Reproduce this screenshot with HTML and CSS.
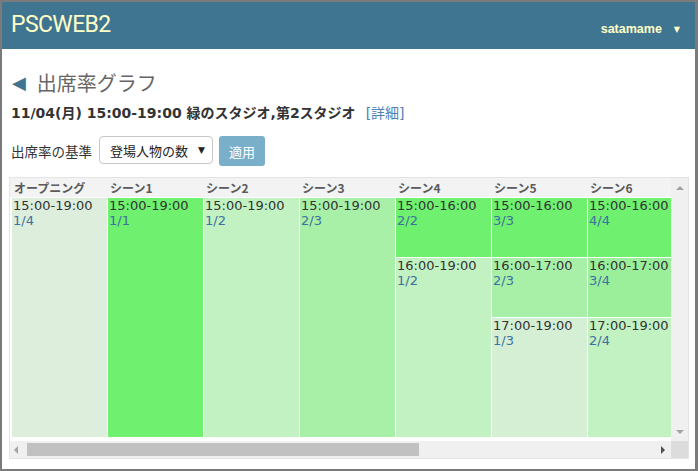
FILE: index.html
```html
<!DOCTYPE html>
<html lang="ja">
<head>
<meta charset="utf-8">
<title>PSCWEB2</title>
<link rel="stylesheet" href="styles.css">
</head>
<body>
<div class="frame">
  <header class="navbar">
    <div class="brand">PSCWEB2</div>
    <div class="user"><span class="user-name">satamame</span><span class="caret">▼</span></div>
  </header>
  <main class="content">
    <h1 class="page-title"><span class="back">◀</span><span>出席率グラフ</span></h1>
    <p class="subtitle"><b>11/04(月) 15:00-19:00 緑のスタジオ,第2スタジオ</b><a class="detail">[詳細]</a></p>
    <div class="form-row">
      <span class="label">出席率の基準</span>
      <div class="select"><span>登場人物の数</span><span class="sel-caret">▼</span></div>
      <button class="btn">適用</button>
    </div>
    <div class="scrollbox">
      <div class="viewport">
        <div class="col">
          <div class="head">オープニング</div>
          <div class="cell h4 r25"><div class="time">15:00-19:00</div><div class="ratio">1/4</div></div>
        </div>
        <div class="col">
          <div class="head">シーン1</div>
          <div class="cell h4 r100"><div class="time">15:00-19:00</div><div class="ratio">1/1</div></div>
        </div>
        <div class="col">
          <div class="head">シーン2</div>
          <div class="cell h4 r50"><div class="time">15:00-19:00</div><div class="ratio">1/2</div></div>
        </div>
        <div class="col">
          <div class="head">シーン3</div>
          <div class="cell h4 r67"><div class="time">15:00-19:00</div><div class="ratio">2/3</div></div>
        </div>
        <div class="col">
          <div class="head">シーン4</div>
          <div class="cell h1 r100"><div class="time">15:00-16:00</div><div class="ratio">2/2</div></div>
          <div class="cell h3 r50"><div class="time">16:00-19:00</div><div class="ratio">1/2</div></div>
        </div>
        <div class="col">
          <div class="head">シーン5</div>
          <div class="cell h1 r100"><div class="time">15:00-16:00</div><div class="ratio">3/3</div></div>
          <div class="cell h1 r67"><div class="time">16:00-17:00</div><div class="ratio">2/3</div></div>
          <div class="cell h2 r33"><div class="time">17:00-19:00</div><div class="ratio">1/3</div></div>
        </div>
        <div class="col">
          <div class="head">シーン6</div>
          <div class="cell h1 r100"><div class="time">15:00-16:00</div><div class="ratio">4/4</div></div>
          <div class="cell h1 r75"><div class="time">16:00-17:00</div><div class="ratio">3/4</div></div>
          <div class="cell h2 r50"><div class="time">17:00-19:00</div><div class="ratio">2/4</div></div>
        </div>
      </div>
      <div class="vbar">
        <span class="arr-up"></span>
        <span class="arr-down"></span>
      </div>
      <div class="hbar">
        <span class="arr-left"></span>
        <span class="thumb"></span>
        <span class="arr-right"></span>
      </div>
      <div class="corner"></div>
    </div>
  </main>
</div>
</body>
</html>
```

FILE: styles.css
```css
* { box-sizing: border-box; }
html, body { margin: 0; padding: 0; }
body {
  font-family: "DejaVu Sans", "Noto Sans CJK JP", sans-serif;
  color: #333;
  background: #fff;
}
.frame {
  width: 698px;
  height: 471px;
  border: 2px solid #7b7b7b;
  border-right-width: 3px;
  overflow: hidden;
}
.navbar {
  height: 47px;
  background: #3f7590;
  display: flex;
  align-items: center;
  justify-content: space-between;
  padding: 0 15px 0 9px;
}
.brand {
  font-family: Roboto, "Liberation Sans", sans-serif;
  font-size: 23px;
  letter-spacing: -0.6px;
  color: #ffffc8;
  line-height: 1;
  margin-top: -2px;
}
.user {
  display: flex;
  align-items: center;
  color: #ffffc8;
  margin-top: 7px;
}
.user-name {
  font-family: "Liberation Sans", Arial, sans-serif;
  font-weight: bold;
  font-size: 12.5px;
}
.caret {
  font-size: 8px;
  margin-left: 12px;
}
.content {
  padding: 0 6px 0 7px;
}
.page-title {
  margin: 20px 0 0 0;
  height: 28px;
  line-height: 28px;
  font-weight: normal;
  font-size: 20px;
  color: #666;
  font-family: "Noto Sans CJK JP", sans-serif;
  display: flex;
  align-items: center;
}
.back {
  color: #3f7590;
  font-family: "DejaVu Sans", sans-serif;
  font-size: 18px;
  margin: 0 11px 0 3px;
}
.subtitle {
  margin: 6px 0 0 2px;
  height: 20px;
  line-height: 20px;
  font-size: 14px;
  color: #333;
}
.subtitle b { font-weight: bold; }
.detail {
  color: #4a82b4;
  margin-left: 10px;
  font-family: "DejaVu Sans", "Noto Sans CJK JP", sans-serif;
}
.form-row {
  margin: 13px 0 0 2px;
  display: flex;
  align-items: center;
  height: 30px;
}
.label {
  font-size: 13.5px;
  font-family: "Noto Sans CJK JP", sans-serif;
  color: #333;
}
.select {
  margin-left: 7px;
  width: 114px;
  height: 28px;
  border: 1px solid #c8c8c8;
  border-radius: 4px;
  display: flex;
  align-items: center;
  justify-content: space-between;
  padding: 0 7px 0 10px;
  font-family: "Noto Sans CJK JP", sans-serif;
  font-size: 13px;
  color: #222;
  margin-top: -2px;
}
.sel-caret {
  font-family: "DejaVu Sans", sans-serif;
  font-size: 9px;
}
.btn {
  margin-left: 6px;
  width: 46px;
  height: 30px;
  border: none;
  border-radius: 3px;
  background: #7aafca;
  color: #fff;
  font-family: "Noto Sans CJK JP", sans-serif;
  font-size: 13px;
  padding: 0;
}
.scrollbox {
  margin-top: 11px;
  width: 680px;
  height: 282px;
  border: 1px solid #e4e4e4;
  display: grid;
  grid-template-columns: 661px 17px;
  grid-template-rows: 263px 17px;
}
.viewport {
  overflow: hidden;
  display: flex;
  gap: 1px;
  padding-left: 2px;
  background: #fff;
  background-image: linear-gradient(#f3f3f3, #f3f3f3);
  background-size: 100% 19px;
  background-repeat: no-repeat;
}
.col {
  flex: 0 0 95px;
  display: flex;
  flex-direction: column;
  gap: 1px;
}
.head {
  height: 19px;
  line-height: 19px;
  background: #f3f3f3;
  font-family: "Noto Sans CJK JP", sans-serif;
  font-weight: bold;
  font-size: 12px;
  color: #5a5a5a;
  padding-left: 2px;
  white-space: nowrap;
}
.cell {
  font-size: 13px;
  line-height: 15px;
  padding-left: 1px;
  white-space: nowrap;
  overflow: hidden;
}
.time { color: #333; }
.ratio { color: #3d6fa0; }
.h1 { height: 59px; }
.h2 { height: 119px; }
.h3 { height: 179px; }
.h4 { height: 239px; }
.r25 { background: #ddefdc; }
.r33 { background: #d5efd5; }
.r50 { background: #c2f1c2; }
.r67 { background: #a8f0a8; }
.r75 { background: #9bef9b; }
.r100 { background: #6ff06f; }
.vbar {
  background: #f0f0f0;
  display: flex;
  flex-direction: column;
  justify-content: space-between;
  align-items: center;
  padding: 8px 0 7px;
}
.arr-up {
  width: 0; height: 0;
  border-left: 4px solid transparent;
  border-right: 4px solid transparent;
  border-bottom: 4px solid #a3a3a3;
}
.arr-down {
  width: 0; height: 0;
  border-left: 4px solid transparent;
  border-right: 4px solid transparent;
  border-top: 4px solid #a3a3a3;
}
.hbar {
  background: #f0f0f0;
  display: flex;
  align-items: center;
  padding: 0 6px 0 4px;
}
.arr-left {
  width: 0; height: 0;
  border-top: 4px solid transparent;
  border-bottom: 4px solid transparent;
  border-right: 4px solid #a3a3a3;
}
.thumb {
  margin-left: 9px;
  width: 392px;
  height: 13px;
  background: #c1c1c1;
}
.arr-right {
  margin-left: auto;
  width: 0; height: 0;
  border-top: 4px solid transparent;
  border-bottom: 4px solid transparent;
  border-left: 4px solid #505050;
}
.corner { background: #dcdcdc; }
```
